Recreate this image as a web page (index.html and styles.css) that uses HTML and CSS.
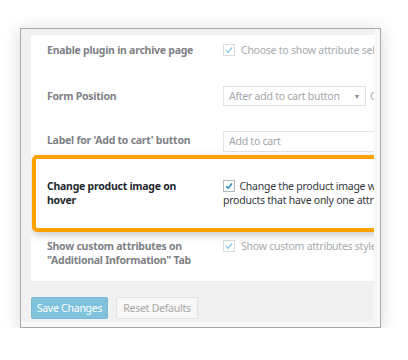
FILE: index.html
```
<!DOCTYPE html>
<html>
<head>
<meta charset="utf-8">
<link rel="stylesheet" href="styles.css">
</head>
<body>
<div class="frame">
  <div class="content">
    <div class="panel">
      <div class="row row-1">
        <div class="label">Enable plugin in archive page</div>
        <div class="field"><span class="cb"><svg viewBox="0 0 12 12"><path d="M2.6 6.2 L5 8.6 L9.6 3" /></svg></span><span class="nowrap">Choose to show attribute selections in archive page</span></div>
      </div>
      <div class="row row-2">
        <div class="label">Form Position</div>
        <div class="field"><span class="select"><span>After add to cart button</span><span class="arrow">▾</span></span><span class="nowrap after">Choose where to show the form</span></div>
      </div>
      <div class="row row-3">
        <div class="label">Label for 'Add to cart' button</div>
        <div class="field"><span class="input">Add to cart</span></div>
      </div>
      <div class="highlight">
        <div class="label">Change product image on hover</div>
        <div class="field wrap"><span class="line"><span class="cb cb-on"><svg viewBox="0 0 12 12"><path d="M2.6 6.2 L5 8.6 L9.6 3" /></svg></span> Change the product image when hovering attributes, only for</span><span class="line">products that have only one attribute</span></div>
      </div>
      <div class="row row-5">
        <div class="label">Show custom attributes on "Additional Information" Tab</div>
        <div class="field"><span class="cb"><svg viewBox="0 0 12 12"><path d="M2.6 6.2 L5 8.6 L9.6 3" /></svg></span><span class="nowrap">Show custom attributes styles in the tab</span></div>
      </div>
    </div>
    <div class="actions">
      <span class="btn btn-primary">Save Changes</span>
      <span class="btn btn-secondary">Reset Defaults</span>
    </div>
  </div>
</div>
</body>
</html>
```
FILE: styles.css
```
html, body {
  margin: 0;
  padding: 0;
  background: #ffffff;
}
body {
  font-family: "Noto Sans", "Open Sans", sans-serif;
  font-size: 10.5px;
  letter-spacing: -0.25px;
  line-height: 14px;
}
.frame {
  position: relative;
  margin: 28px 0 0 20px;
  width: 361px;
  height: 300px;
  border: 1px solid #a9a9a9;
  background: #f8f8f8;
  box-shadow: 0 2px 16px rgba(0, 0, 0, 0.16);
  padding: 0 6px 6px 0;
  box-sizing: border-box;
}
.content {
  background: #f1f1f1;
  height: 100%;
  padding: 6px 0 0 10px;
  box-sizing: border-box;
}
.panel {
  background: #ffffff;
  height: 246px;
  overflow: hidden;
}
.row, .highlight {
  display: grid;
  grid-template-columns: 176px auto;
  align-items: center;
  padding-left: 16px;
}
.label {
  font-weight: bold;
  color: #7e8185;
}
.field {
  color: #a7aaad;
  display: flex;
  align-items: center;
  white-space: nowrap;
}
.nowrap {
  white-space: nowrap;
}
.cb {
  display: inline-block;
  width: 12px;
  height: 12px;
  border: 1px solid #dadde0;
  box-sizing: border-box;
  background: #fff;
  margin-right: 6px;
  flex: none;
}
.cb svg {
  display: block;
  width: 10px;
  height: 10px;
}
.cb path {
  fill: none;
  stroke: #8cc8e4;
  stroke-width: 1.6;
}
.row-1 {
  height: 28px;
  padding-top: 1px;
}
.row-2 {
  height: 63px;
}
.select {
  display: inline-flex;
  align-items: center;
  justify-content: space-between;
  width: 143px;
  height: 20px;
  border: 1px solid #e3e3e3;
  box-sizing: border-box;
  padding: 0 6px 0 5px;
  color: #a3a6a9;
  flex: none;
}
.arrow {
  font-size: 8px;
  color: #8a8d90;
}
.after {
  margin-left: 4px;
  color: #a7aaad;
}
.row-3 {
  height: 24px;
  align-items: start;
  padding-top: 4px;
}
.input {
  display: block;
  width: 200px;
  height: 21px;
  border: 1px solid #e3e3e3;
  box-sizing: border-box;
  padding: 2px 5px;
  color: #a3a6a9;
}
.row-3 .label {
  padding-top: 2px;
}
.highlight {
  position: relative;
  margin-left: 1px;
  margin-right: -40px;
  height: 77px;
  box-sizing: border-box;
  border: 4px solid #ffa200;
  border-radius: 5px;
  background: #fff;
  padding: 20px 0 18px 11px;
  align-items: start;
  box-shadow: 0 3px 8px rgba(0, 0, 0, 0.22);
}
.highlight .label {
  color: #23282d;
  width: 150px;
}
.highlight .field {
  display: block;
  color: #32373c;
}
.line {
  display: block;
  white-space: nowrap;
}
.cb-on {
  border-color: #b4b9be;
  vertical-align: -2px;
  margin-right: 2px;
}
.cb-on path {
  stroke: #1e8cbe;
  stroke-width: 1.8;
}
.row-5 {
  align-items: start;
  padding-top: 7px;
}
.row-5 .label {
  width: 160px;
}
.actions {
  display: flex;
  gap: 8px;
  padding-top: 16px;
}
.btn {
  display: inline-flex;
  align-items: center;
  justify-content: center;
  height: 22px;
  box-sizing: border-box;
  border-radius: 2px;
  font-size: 10.5px;
}
.btn-primary {
  width: 77px;
  background: #80c1dc;
  border: 1px solid #78b8d3;
  color: #ffffff;
}
.btn-secondary {
  width: 82px;
  background: #f7f7f7;
  border: 1px solid #e2e2e2;
  color: #a8a8a8;
}
```
